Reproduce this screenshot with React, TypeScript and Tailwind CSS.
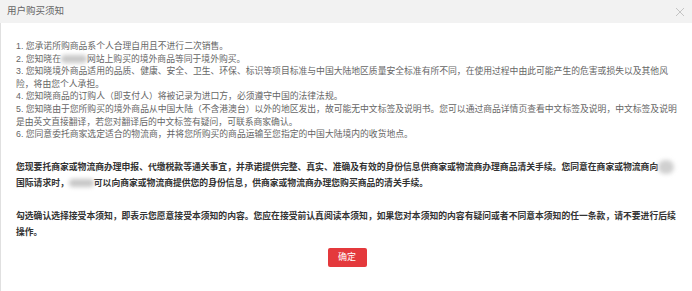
export default function App() {
  return (
    <div className="w-[692px] h-[291px] bg-white overflow-hidden font-['Liberation_Sans','Noto_Sans_CJK_SC',sans-serif]">
      {/* Dialog header */}
      <div className="h-[23px] bg-[#f2f2f2] flex items-center justify-between pl-[7px] pr-[7px]">
        <span className="text-[9.5px] text-[#666]">用户购买须知</span>
        <svg className="w-[10px] h-[10px]" viewBox="0 0 10 10">
          <path d="M1 1 9 9M9 1 1 9" stroke="#c4c4c4" strokeWidth="1" fill="none" />
        </svg>
      </div>

      {/* Body */}
      <div className="h-[268px] border-l border-[#e0e0e0] pl-[15px] pr-[8px] pt-[17px]">
        <div className="text-[8.8px] leading-[12.6px] text-[#666] whitespace-nowrap">
          1. 您承诺所购商品系个人合理自用且不进行二次销售。<br />
          2. 您知晓在
          <span className="inline-block align-middle w-[26px] h-[8px] bg-[#c8c8c8] rounded-full blur-[2px]" />
          网站上购买的境外商品等同于境外购买。<br />
          3. 您知晓境外商品适用的品质、健康、安全、卫生、环保、标识等项目标准与中国大陆地区质量安全标准有所不同，在使用过程中由此可能产生的危害或损失以及其他风<br />
          险，将由您个人承担。<br />
          4. 您知晓商品的订购人（即支付人）将被记录为进口方，必须遵守中国的法律法规。<br />
          5. 您知晓由于您所购买的境外商品从中国大陆（不含港澳台）以外的地区发出，故可能无中文标签及说明书。您可以通过商品详情页查看中文标签及说明，中文标签及说明<br />
          是由英文直接翻译，若您对翻译后的中文标签有疑问，可联系商家确认。<br />
          6. 您同意委托商家选定适合的物流商，并将您所购买的商品运输至您指定的中国大陆境内的收货地点。
        </div>

        <p className="mt-[18px] text-[8.8px] leading-[16px] font-bold text-[#333] whitespace-nowrap">
          您现要托商家或物流商办理申报、代缴税款等通关事宜，并承诺提供完整、真实、准确及有效的身份信息供商家或物流商办理商品清关手续。您同意在商家或物流商向
          <span className="inline-block align-middle w-[16px] h-[14px] bg-[#d0d0d0] rounded-full blur-[2px]" />
          <br />
          国际请求时，
          <span className="inline-block align-middle w-[25px] h-[8px] bg-[#c8c8c8] rounded-full blur-[2px]" />
          可以向商家或物流商提供您的身份信息，供商家或物流商办理您购买商品的清关手续。
        </p>

        <p className="mt-[17px] text-[8.8px] leading-[16px] font-bold text-[#333] whitespace-nowrap">
          勾选确认选择接受本须知，即表示您愿意接受本须知的内容。您应在接受前认真阅读本须知，如果您对本须知的内容有疑问或者不同意本须知的任一条款，请不要进行后续
          <br />
          操作。
        </p>

        <div className="mt-[8px] flex justify-center pr-[6px]">
          <button className="w-[39px] h-[19px] rounded-[2px] bg-[#e4393c] text-white text-[9px] leading-[19px]">
            确定
          </button>
        </div>
      </div>
    </div>
  );
}
